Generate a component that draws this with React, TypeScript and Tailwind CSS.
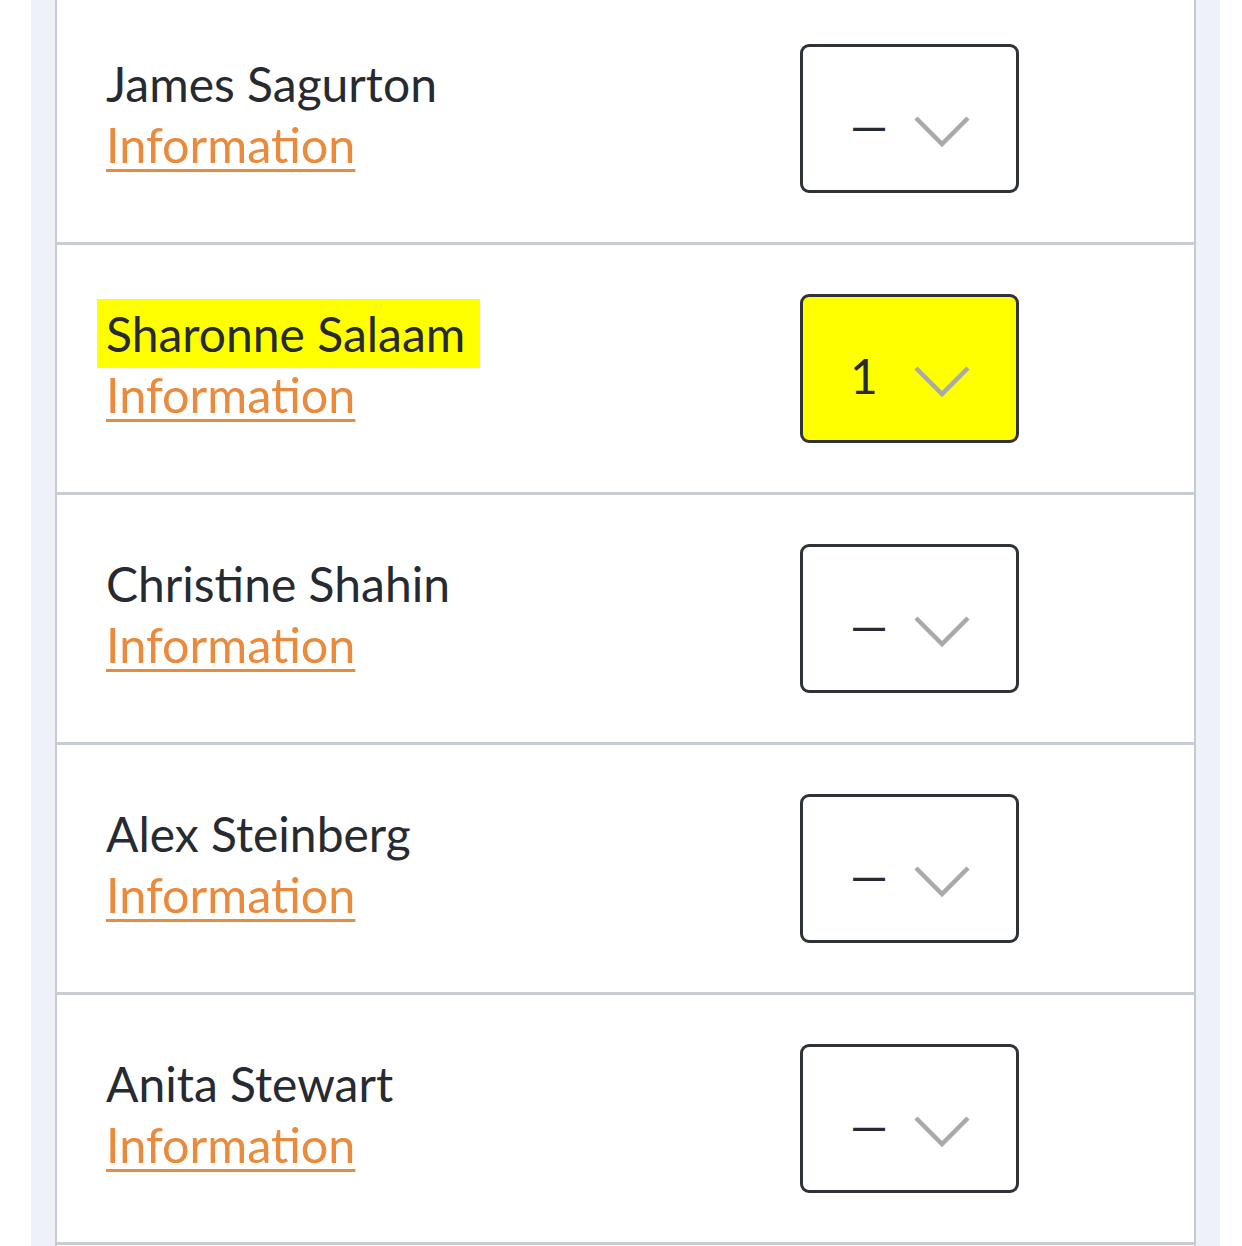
import React from 'react';

type Person = { name: string; rank: string; highlight?: boolean };

const people: Person[] = [
  { name: 'James Sagurton', rank: '—' },
  { name: 'Sharonne Salaam', rank: '1', highlight: true },
  { name: 'Christine Shahin', rank: '—' },
  { name: 'Alex Steinberg', rank: '—' },
  { name: 'Anita Stewart', rank: '—' },
];

function Chevron() {
  return (
    <svg width="58" height="34" viewBox="0 0 58 34" fill="none" className="shrink-0">
      <polyline points="3,3 29,29 55,3" stroke="#a9a9a9" strokeWidth="4.5" />
    </svg>
  );
}

function Row({ person }: { person: Person }) {
  return (
    <div className="h-[250px] border-b-[3px] border-[#c8cdd5] flex items-center justify-between pl-[49px] pr-[175px]">
      <div className="flex flex-col text-[48px] leading-[60px] pb-[10px]">
        <span>
          <span
            className={
              person.highlight
                ? 'bg-[#ffff00] pl-[9px] pr-[15px] py-[6px] -ml-[9px] text-[#272b31]'
                : 'text-[#272b31]'
            }
          >
            {person.name}
          </span>
        </span>
        <a
          href="#"
          className="text-[#e98a3c] text-[48.5px] underline decoration-[3px] underline-offset-[6px] w-fit"
        >
          Information
        </a>
      </div>
      <div
        className={
          'w-[219px] h-[149px] rounded-[9px] border-[3px] border-[#2f3237] flex items-center pt-[27px] pl-[47px] ' +
          (person.highlight ? 'bg-[#ffff00]' : 'bg-white')
        }
      >
        <span className="w-[36px] text-[48px] leading-none text-[#272b31] -mt-[12px]">{person.rank}</span>
        <span className="ml-[27px] flex">
          <Chevron />
        </span>
      </div>
    </div>
  );
}

export default function App() {
  return (
    <div
      className="w-[1242px] h-[1246px] overflow-hidden bg-white"
      style={{ fontFamily: 'Lato, "Noto Sans", sans-serif' }}
    >
      <div className="ml-[31px] w-[1189px] h-[1260px] bg-[#eef2f8] px-[24px]">
        <div className="h-full bg-white border-x-2 border-[#c5cad3] -mt-[5px]">
          {people.map((p) => (
            <Row key={p.name} person={p} />
          ))}
        </div>
      </div>
    </div>
  );
}
